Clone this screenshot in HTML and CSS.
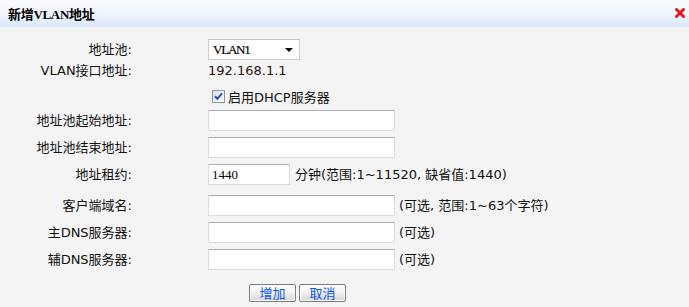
FILE: index.html
```html
<!DOCTYPE html>
<html lang="zh-CN">
<head>
<meta charset="utf-8">
<title>新增VLAN地址</title>
<link rel="stylesheet" href="styles.css">
</head>
<body>
<div class="dialog">
  <div class="titlebar">
    <span class="title">新增VLAN地址</span>
    <svg class="close" width="10" height="10" viewBox="0 0 10 10" aria-label="关闭">
      <path d="M1.5 1.5 L8.5 8.5 M8.5 1.5 L1.5 8.5" stroke="#f07f86" stroke-width="3.4" stroke-linecap="square"/>
      <path d="M1.5 1.5 L8.5 8.5 M8.5 1.5 L1.5 8.5" stroke="#e3101b" stroke-width="2.2" stroke-linecap="square"/>
    </svg>
  </div>
  <div class="form">
    <div class="row h21">
      <span class="lbl">地址池:</span>
      <div class="field">
        <div class="select"><span class="sel-text">VLAN1</span><span class="arrow"></span></div>
      </div>
    </div>
    <div class="row h22">
      <span class="lbl">VLAN接口地址:</span>
      <div class="field"><span class="value">192.168.1.1</span></div>
    </div>
    <div class="row h28">
      <span class="lbl"></span>
      <div class="field check">
        <svg class="cb" width="13" height="13" viewBox="0 0 13 13">
          <defs>
            <linearGradient id="cbg" x1="0" y1="0" x2="1" y2="1">
              <stop offset="0" stop-color="#d9dfe8"/>
              <stop offset="1" stop-color="#ffffff"/>
            </linearGradient>
          </defs>
          <rect x="0.5" y="0.5" width="12" height="12" fill="url(#cbg)" stroke="#8a96a6"/>
          <path d="M3 6.2 L5.4 8.8 L10 3.4" fill="none" stroke="#2a4fc0" stroke-width="2"/>
        </svg>
        <span class="cb-text">启用DHCP服务器</span>
      </div>
    </div>
    <div class="row h21">
      <span class="lbl">地址池起始地址:</span>
      <div class="field"><span class="input wide"></span></div>
    </div>
    <div class="row h21 gap6">
      <span class="lbl">地址池结束地址:</span>
      <div class="field"><span class="input wide"></span></div>
    </div>
    <div class="row h21 gap6">
      <span class="lbl">地址租约:</span>
      <div class="field"><span class="input short">1440</span><span class="hint lease">分钟(范围:1~11520, 缺省值:1440)</span></div>
    </div>
    <div class="row h21 gap10">
      <span class="lbl">客户端域名:</span>
      <div class="field"><span class="input wide"></span><span class="hint">(可选, 范围:1~63个字符)</span></div>
    </div>
    <div class="row h21 gap6">
      <span class="lbl">主DNS服务器:</span>
      <div class="field"><span class="input wide"></span><span class="hint">(可选)</span></div>
    </div>
    <div class="row h21 gap6">
      <span class="lbl">辅DNS服务器:</span>
      <div class="field"><span class="input wide"></span><span class="hint">(可选)</span></div>
    </div>
    <div class="row buttons">
      <span class="lbl"></span>
      <div class="field btns">
        <button class="btn" type="button">增加</button>
        <button class="btn" type="button">取消</button>
      </div>
    </div>
  </div>
</div>
</body>
</html>
```

FILE: styles.css
```css
html, body {
  margin: 0;
  padding: 0;
  background: #f4f4f4;
}
body {
  font-family: "DejaVu Sans", "Noto Sans CJK SC", sans-serif;
  font-size: 13px;
  color: #111;
}
.dialog {
  width: 689px;
  height: 307px;
  background: #f4f4f4;
}
.titlebar {
  height: 27px;
  display: flex;
  align-items: center;
  justify-content: space-between;
  padding: 0 4px 0 8px;
  background: linear-gradient(to bottom, #fbfcfe 0%, #eef4fd 55%, #d9e7fa 100%);
  box-sizing: border-box;
}
.title {
  font-family: "Liberation Serif", "Noto Sans CJK SC", serif;
  font-weight: bold;
  font-size: 13px;
  color: #000;
  letter-spacing: -0.3px;
}
.close {
  display: block;
  margin-top: -1px;
}
.form {
  padding-top: 12px;
}
.row {
  display: grid;
  grid-template-columns: 132px auto;
  column-gap: 76px;
  align-items: center;
}
.h21 { height: 21px; }
.h22 { height: 22px; }
.h28 { height: 28px; }
.gap6 { margin-top: 6px; }
.gap10 { margin-top: 10px; }
.lbl {
  text-align: right;
  white-space: nowrap;
  line-height: 16px;
}
.field {
  display: flex;
  align-items: center;
  white-space: nowrap;
}
.select {
  width: 92px;
  height: 21px;
  box-sizing: border-box;
  background: #fff;
  border: 1px solid #d0d0d0;
  border-top-color: #c2c2c2;
  display: flex;
  align-items: center;
  justify-content: space-between;
  padding: 0 6px 0 4px;
}
.sel-text {
  font-family: "Liberation Serif", serif;
  font-size: 13px;
  letter-spacing: -1.2px;
  color: #000;
  -webkit-text-stroke: 0.2px #000;
}
.arrow {
  width: 0;
  height: 0;
  border-left: 4px solid transparent;
  border-right: 4px solid transparent;
  border-top: 4px solid #000;
}
.value {
  color: #2a1212;
  line-height: 16px;
}
.check {
  padding-left: 4px;
}
.cb {
  display: block;
  margin-right: 3px;
}
.input {
  display: block;
  height: 21px;
  box-sizing: border-box;
  background: #fff;
  border: 1px solid #dcdcdc;
  border-top-color: #acacac;
  border-radius: 1px;
  font-family: "Liberation Serif", serif;
  font-size: 13px;
  line-height: 19px;
  padding-left: 3px;
  color: #000;
}
.wide { width: 187px; }
.short { width: 82px; }
.hint {
  margin-left: 4px;
  line-height: 16px;
}
.hint.lease {
  margin-left: 5px;
}
.buttons {
  margin-top: 14px;
  height: 18px;
}
.btns {
  margin-left: 41px;
  gap: 3px;
}
.btn {
  width: 47px;
  height: 18px;
  box-sizing: border-box;
  padding: 0;
  margin: 0;
  border: 1px solid #7d7d7d;
  border-radius: 2px;
  background: linear-gradient(to bottom, #ffffff 0%, #f2f2f2 45%, #d6d6d6 100%);
  font-family: "Noto Sans CJK SC", sans-serif;
  font-size: 13px;
  line-height: 16px;
  color: #0a55f0;
  box-shadow: inset 0 0 0 1px #fafafa;
}
```
